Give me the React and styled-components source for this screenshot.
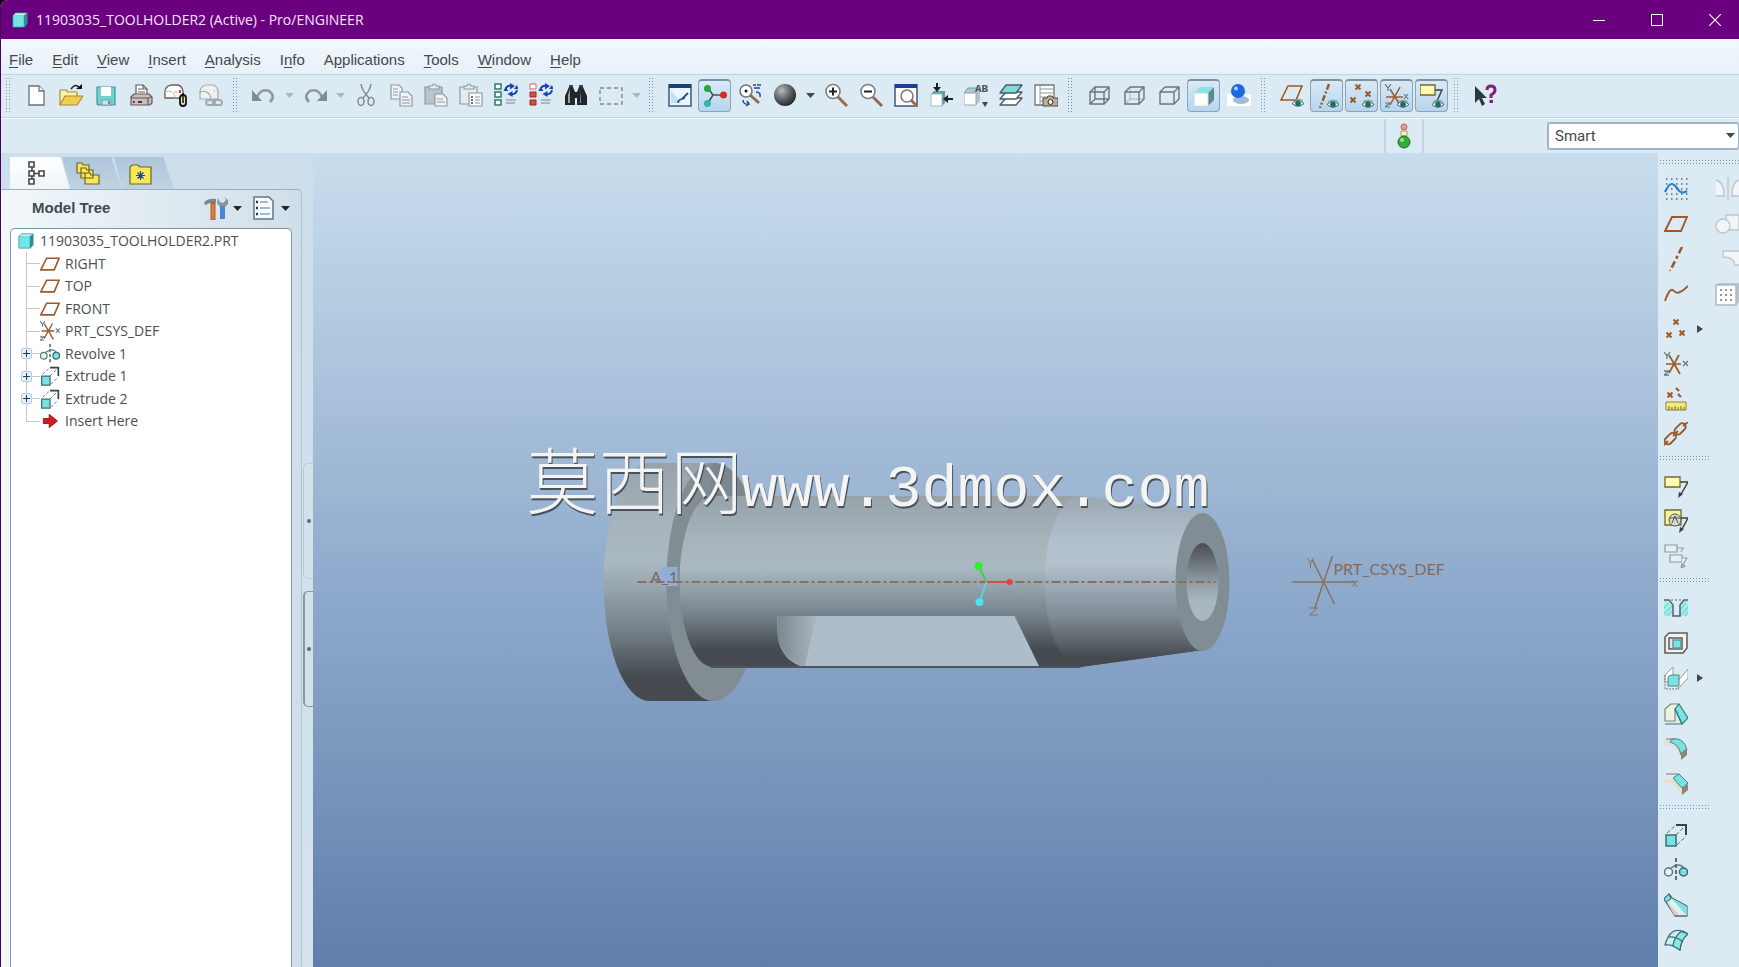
import React, { useState } from 'react';
import styled, { createGlobalStyle, css } from 'styled-components';

const GlobalStyle = createGlobalStyle`
  * {
    box-sizing: border-box;
  }
  html, body, #root {
    height: 100%;
    margin: 0;
  }
  body {
    overflow: hidden;
    background: #16001c;
    font-family: "Liberation Sans", Arial, sans-serif;
    color: #43494f;
  }
  button {
    border: 0;
    padding: 0;
    background: none;
    font: inherit;
    color: inherit;
  }
`;

const Window = styled.div`
  height: 100%;
  display: flex;
  flex-direction: column;
  background: #dce9f2;
  border-left: 1px solid #4b0060;
  border-top-left-radius: 8px;
  overflow: hidden;
`;

const TitleBar = styled.header`
  display: flex;
  align-items: center;
  height: 39px;
  flex-shrink: 0;
  padding: 0 1px 0 10px;
  background: #6a007f;
  color: #f6e6fa;
`;

const AppTitle = styled.h1`
  margin: 0 auto 0 7px;
  font: 400 14px/20px "Open Sans", sans-serif;
`;

const WindowControls = styled.div`
  display: flex;
  gap: 11px;
`;

const WindowButton = styled.button`
  display: flex;
  align-items: center;
  justify-content: center;
  width: 47px;
  height: 39px;

  &:hover {
    background: #84209a;
  }
`;

const MenuBar = styled.nav`
  display: flex;
  gap: 19px;
  height: 35px;
  flex-shrink: 0;
  padding: 7px 8px 0;
  background: linear-gradient(#f3f9fd, #e6f0f7);
`;

const MenuButton = styled.button`
  font-size: 15px;
  line-height: 28px;

  u {
    text-underline-offset: 2px;
  }
`;

const ToolBar = styled.div`
  display: flex;
  align-items: center;
  gap: 2px;
  height: 44px;
  flex-shrink: 0;
  padding: 0 0 2px 4px;
  border-top: 1px solid #c3d4e1;
  border-bottom: 1px solid #c3d4e1;
  background: #dceaf3;
`;

const gripDots = css`
  background-image: radial-gradient(circle, #7c93a8 1px, transparent 1px);
  background-size: 3px 3px;
`;

const Grip = styled.span`
  ${gripDots}
  width: 6px;
  height: 36px;
  margin: 0 ${(p) => (p.$first ? 6 : 7)}px 0 ${(p) => (p.$first ? 0 : 3)}px;
`;

const ToolButton = styled.button`
  display: flex;
  align-items: center;
  justify-content: center;
  width: 33px;
  height: 33px;
  flex-shrink: 0;
  border-radius: 4px;

  &:hover {
    background: #cfe2f0;
  }

  ${(p) =>
    p.$on &&
    css`
      border: 1px solid #8fa5b6;
      border-top: 2px solid #80929f;
      background: linear-gradient(#d9e9f6, #b5d5ef);
    `}
`;

const DropButton = styled.button`
  display: flex;
  align-items: center;
  justify-content: center;
  width: 14px;
  height: 33px;
  flex-shrink: 0;
`;

const StatusRow = styled.div`
  display: flex;
  align-items: stretch;
  height: 35px;
  flex-shrink: 0;
  border-top: 1px solid #f4fafd;
  background: #dceaf3;
`;

const RegenStatus = styled.div`
  display: flex;
  align-items: center;
  justify-content: center;
  width: 40px;
  margin-left: auto;
  border-left: 2px solid #c5d4df;
  border-right: 2px solid #c5d4df;
`;

const FilterField = styled.label`
  position: relative;
  width: 192px;
  margin: 3px 0 3px 123px;

  svg {
    position: absolute;
    right: 4px;
    top: 9px;
    pointer-events: none;
  }
`;

const FilterSelect = styled.select`
  appearance: none;
  width: 100%;
  height: 28px;
  padding: 0 6px;
  border: 2px solid #9db5c6;
  border-right-width: 1px;
  border-radius: 3px;
  background: #fff;
  color: #43494f;
  font: 400 15px Roboto, sans-serif;
`;

const Body = styled.main`
  display: flex;
  flex: 1;
  min-height: 0;
`;

const Navigator = styled.aside`
  display: flex;
  width: 312px;
  flex-shrink: 0;
  padding-top: 4px;
  background: linear-gradient(#cddfec, #d3e2ec);
`;

const NavMain = styled.div`
  display: flex;
  flex-direction: column;
  width: 301px;
`;

const TabList = styled.div`
  display: flex;
  height: 32px;
  padding-left: 9px;
`;

const Tab = styled.button`
  display: flex;
  align-items: center;
  width: 60px;
  padding-left: 14px;
  background: linear-gradient(#aec6da, #c0d3e2);
  clip-path: polygon(0 0, 82% 0, 100% 100%, 14% 100%);

  & + & {
    margin-left: -8px;
  }

  ${(p) =>
    p.$active &&
    css`
      background: linear-gradient(#fff, #f0f5f9);
      clip-path: polygon(0 0, 84% 0, 100% 100%, 0 100%);
    `}
`;

const NavPanel = styled.section`
  display: flex;
  flex-direction: column;
  flex: 1;
  min-height: 0;
  padding: 0 9px 0 9px;
  border-top: 1px solid #9bb0c1;
  border-right: 1px solid #b3c5d3;
  border-top-right-radius: 5px;
  background: linear-gradient(90deg, #f2f7fa, #cfdfea);
`;

const PanelHeader = styled.div`
  display: flex;
  align-items: center;
  height: 38px;
  padding: 0 2px 2px 22px;
`;

const PanelTitle = styled.h2`
  margin: 0 auto 0 0;
  font-size: 15px;
  line-height: 20px;
`;

const PanelTool = styled.button`
  display: flex;
  align-items: center;
  gap: 5px;
  margin-left: 10px;
`;

const Tree = styled.ul`
  flex: 1;
  margin: 0;
  padding: 1px 0 0;
  list-style: none;
  border: 1px solid #7c98a8;
  border-bottom: 0;
  border-radius: 5px 5px 0 0;
  background: #fff;
  display: grid;
  grid-template-rows: repeat(8, 22px 23px);
  align-content: start;
`;

const TreeRow = styled.li`
  display: flex;
  align-items: center;
  padding-left: 6px;
  font: 400 14px/20px "Open Sans", sans-serif;
  color: #4c4e52;
`;

// dotted guide drawn as two backgrounds: the trunk and the branch
const Guide = styled.span`
  display: flex;
  align-items: center;
  align-self: stretch;
  width: 23px;
  padding-left: 4px;
  background:
    linear-gradient(#c3c8cc, #c3c8cc) 9px 0 / 1px ${(p) => (p.$last ? '50%' : '100%')} no-repeat,
    linear-gradient(#c3c8cc, #c3c8cc) 9px 50% / 14px 1px no-repeat;
`;

const Expander = styled.button`
  display: flex;
  align-items: center;
  justify-content: center;
  width: 11px;
  height: 11px;
  border: 1px solid #b4cde0;
  border-radius: 2px;
  background: #e4f1fa;
`;

const TreeIcon = styled.span`
  display: flex;
  margin-right: 5px;
`;

const Splitter = styled.div`
  display: flex;
  flex-direction: column;
  justify-content: center;
  gap: 12px;
  width: 11px;
  padding: 46px 0 0 1px;
`;

const SplitHandle = styled.button`
  display: flex;
  align-items: center;
  justify-content: center;
  height: 116px;
  border: 1px solid ${(p) => (p.$strong ? '#8b98a1' : '#bccbd6')};
  border-right: 0;
  border-left-width: ${(p) => (p.$strong ? 2 : 1)}px;
  border-radius: 5px 0 0 5px;
  background: #d3e2ea;

  &::after {
    content: '';
    width: 4px;
    height: 4px;
    border-radius: 2px;
    background: #5d6b76;
  }
`;

const Viewport = styled.section`
  flex: 1;
  min-width: 0;
  background: linear-gradient(#c8dded 0%, #a2bbd6 36%, #8ca8cb 55%, #7c98bd 73%, #5f7eac 100%);

  svg {
    display: block;
    width: 100%;
    height: 100%;
  }
`;

const FeatureBar = styled.aside`
  display: flex;
  width: 81px;
  flex-shrink: 0;
  padding-top: 6px;
  overflow: hidden;
  background: #dceaf3;
`;

const FeatureColumn = styled.div`
  display: flex;
  flex-direction: column;
  gap: 2px;
  width: 51px;
  flex-shrink: 0;
  padding-left: 1px;
`;

const FeatureGrip = styled.span`
  ${gripDots}
  width: 50px;
  height: 6px;
  margin: ${(p) => (p.$first ? '0 0 5px' : '3px 0 6px')};
`;

const FeatureRow = styled.div`
  display: flex;
  align-items: center;
  height: 33px;
`;

const Caret = ({ color = '#3d474f', right }) => (
  <svg width="9" height="9" viewBox="0 0 9 9" aria-hidden="true">
    <path d={right ? 'M2 1l6 4-6 4z' : 'M0 2h9L4.500 7z'} fill={color} />
  </svg>
);

const BROWN = '#9a5a2c';
const GREY = '#8f9aa2';

const Eye = () => (
  <g>
    <path d="M12 20.500q5.500-6 12 0q-6 5.500-12 0z" fill="#f3f9fb" stroke="#35675f" />
    <circle cx="18" cy="20.500" r="2.800" fill="#1f6d5c" />
    <path d="M13 17.500q5-3 10 0" fill="none" stroke="#7b9a97" />
  </g>
);

const Cross = ({ x, y, s = 2.5 }) => (
  <path
    d={`M${x - s} ${y - s}L${x + s} ${y + s}M${x + s} ${y - s}L${x - s} ${y + s}`}
    stroke={BROWN}
    strokeWidth="2"
    fill="none"
  />
);

const Spin = () => (
  <g fill="none" stroke="#1647b0" strokeWidth="2">
    <path d="M11.500 7q1-5 6-4M23 7q-1 5-6 4" />
    <path d="M16 0l5 3-5 3.500zM18.500 8l-5 3 5 3z" fill="#1647b0" stroke="none" />
    <path d="M9.500 8l2-4 3 4zM20 6l3-4 1.500 4z" fill="#1647b0" stroke="none" />
  </g>
);

const icons = {
  part: (
    <g>
      <path d="M2 6l4-4h16v15l-4 5H2z" fill="#2d8f90" />
      <path d="M3 6h14v15H3z" fill="#71e6e6" />
      <path d="M3 6l3-3h15l-4 3z" fill="#baf5f3" />
    </g>
  ),
  newFile: (
    <g fill="#fff" stroke="#68727a" strokeWidth="1.300">
      <path d="M5 3h10l5 5v14H5z" />
      <path d="M15 3v5h5" />
    </g>
  ),
  open: (
    <g strokeWidth="1.200" strokeLinejoin="round">
      <path d="M1 22V7h6l2 2h9v4" fill="#fff2a6" stroke="#a98b2e" />
      <path d="M1 22l5-9h18l-6 9z" fill="#f0cf57" stroke="#a98b2e" />
      <path d="M12 6q5-7 9 0" fill="none" stroke="#20282c" strokeWidth="1.500" />
      <path d="M17 6h6V1z" fill="#111" />
    </g>
  ),
  save: (
    <g>
      <path d="M3 4h18v18H4l-1-1z" fill="#6fd3d0" stroke="#4c8f95" strokeWidth="1.200" />
      <path d="M7 4h10v9H7z" fill="#fff" />
      <path d="M8 17h9v5H8z" fill="#d6dfe3" stroke="#5d9a9e" strokeWidth="0.800" />
      <path d="M14 18h2v3h-2z" fill="#4c8f95" />
    </g>
  ),
  print: (
    <g stroke="#625b59" strokeWidth="1.200">
      <path d="M7 13V2h7l4 4v7z" fill="#fff" />
      <path d="M9 6h4M9 9h7M14 2v4h4" fill="none" />
      <path d="M2 14l3-3h15l3 3v6l-2 2H2z" fill="#c9beba" />
      <path d="M2 15h17v7M19 15l4-1" fill="none" />
      <path d="M4 19h2m3 0h4" stroke="#2f3d44" strokeWidth="2" />
      <path d="M5 19h1" stroke="#cc3a2e" strokeWidth="2" />
    </g>
  ),
  mail: (
    <g>
      <path d="M1 15V8q1-6 8-6h5q4 1 5 6v7z" fill="#fff" stroke="#6d5d58" strokeWidth="1.300" />
      <path d="M1 9q8-3 11 6M10 9h6" fill="none" stroke="#cabdb6" />
      <path d="M15 7h2v3h-2z" fill="#d8432f" />
      <rect x="16" y="12" width="6" height="11" rx="3" fill="#f4e7ae" stroke="#111" strokeWidth="1.800" />
      <path d="M19 10v10" stroke="#111" strokeWidth="1.500" />
    </g>
  ),
  mailLink: (
    <g fill="none" stroke="#a1a9ae" strokeWidth="1.200">
      <path d="M1 16V8q1-6 8-6h5q4 1 5 6v8z" fill="#edf1f3" />
      <path d="M1 9q8-3 11 6M15 8h1" />
      <rect x="7" y="17" width="9" height="5" rx="2.500" fill="#dbe3e8" strokeWidth="2" />
      <rect x="14" y="17" width="9" height="5" rx="2.500" strokeWidth="2" />
    </g>
  ),
  undo: (
    <g>
      <path d="M5 14q4-9 12-6q7 5 1 11" fill="none" stroke="#8c99a3" strokeWidth="2.600" />
      <path d="M0 7v11h10z" fill="#7d8c97" />
    </g>
  ),
  redo: (
    <g>
      <path d="M19 14q-4-9-12-6q-7 5 -1 11" fill="none" stroke="#8c99a3" strokeWidth="2.600" />
      <path d="M24 7v11H14z" fill="#7d8c97" />
    </g>
  ),
  cut: (
    <g fill="none" stroke="#808c94" strokeWidth="1.500">
      <path d="M7 1q1 7 8 14M17 1q-1 7-8 14" />
      <ellipse cx="7" cy="18.500" rx="3" ry="4" />
      <ellipse cx="17" cy="18.500" rx="3" ry="4" />
    </g>
  ),
  copy: (
    <g fill="#eef3f6" stroke={GREY} strokeWidth="1.200">
      <path d="M2 2h8l3 3v11H2zM4 6h5M4 9h5M4 12h5" />
      <path d="M11 9h8l4 4v10H11zM13 14h6M13 17h8M13 20h8" />
    </g>
  ),
  paste: (
    <g stroke={GREY} strokeWidth="1.200">
      <path d="M1 4h17v17H1z" fill="#b9c3ca" />
      <path d="M5 5V3h3q2-4 4 0h3v3H5z" fill="#e6ecf0" />
      <path d="M11 11h8l4 4v8H11zM13 16h6M13 19h8" fill="#eef3f6" />
    </g>
  ),
  pasteSpecial: (
    <g stroke={GREY} strokeWidth="1.200">
      <path d="M1 4h17v17H1z" fill="#e3ebf0" />
      <path d="M5 5V3h3q2-4 4 0h3v3H5z" fill="#e6ecf0" />
      <path d="M10 10h13v13H10zM16 14h5M16 17h5M16 20h5" fill="#f7fafb" />
      <path d="M12 14h2M12 17h2M12 20h2" stroke="#68747d" strokeWidth="1.800" />
    </g>
  ),
  regen: (
    <g>
      <g fill="#fff" stroke="#2f7c63" strokeWidth="1.500">
        <path d="M1 1h6v5H1zM1 9h6v5H1zM1 17h6v5H1z" />
      </g>
      <Spin />
      <path d="M12 17h10M12 20h9" stroke="#7b868e" />
    </g>
  ),
  regenManager: (
    <g>
      <path d="M1 1h6v5H1z" fill="#fff" stroke="#c46a62" />
      <path d="M1 9h6v5H1zM1 17h6v5H1z" fill="#dc4b3c" stroke="#8f2c25" />
      <Spin />
      <path d="M12 17h10M12 20h9" stroke="#7b868e" />
    </g>
  ),
  find: (
    <g>
      <path d="M1 22V13l4-9h4l2 5v13zM13 22V9l2-5h4l4 9v9z" fill="#22272b" />
      <path d="M10 9h4v6h-4z" fill="#22272b" />
      <path d="M4 12l2-6v14H4zM16 12V6l1 14h-1z" fill="#9ba39a" />
      <path d="M5 3h4M15 3h4" stroke="#444" strokeWidth="2" />
    </g>
  ),
  select: <path d="M1 5h22v16H1z" fill="none" stroke="#7e8a92" strokeWidth="1.400" strokeDasharray="4 3" />,
  repaint: (
    <g>
      <path d="M1 2h22v21H1z" fill="#eaf5fd" stroke="#38597c" strokeWidth="1.500" />
      <path d="M1 1h22v4H1z" fill="#1c3f77" />
      <path d="M3 7l10 13H3z" fill="#bfe0f5" />
      <path d="M10 20q0-3 4-4l6-6M14 16l3-1" fill="none" stroke="#24508f" strokeWidth="1.800" />
    </g>
  ),
  spinCenter: (
    <g>
      <path d="M5 4l5 7-5 8M10 11h9" fill="none" stroke="#4a4f52" strokeWidth="1.600" />
      <circle cx="4.500" cy="4.500" r="3.500" fill="#25a832" />
      <circle cx="4.500" cy="19.500" r="3.500" fill="#2fb9a5" />
      <circle cx="20.500" cy="11" r="3.500" fill="#cf2f1b" />
    </g>
  ),
  orient: (
    <g>
      <path d="M12 12l9 8" stroke="#8c6c55" strokeWidth="3" />
      <circle cx="8" cy="8" r="6" fill="#fff" stroke="#6f777c" strokeWidth="1.600" />
      <circle cx="8" cy="8" r="1.500" fill="#111" />
      <path d="M15 2h3m1 0h4M16 5h6M18 9q5 0 4 5M5 17q0 5 6 4l-2-3m2 3l-3 2" fill="none" stroke="#24459b" strokeWidth="1.500" />
    </g>
  ),
  shade: <circle cx="12" cy="12" r="11" fill="url(#sphere)" />,
  zoomIn: (
    <g>
      <path d="M14 14l9 9" stroke="#9a6a50" strokeWidth="3" />
      <circle cx="9" cy="8.500" r="7" fill="#fff" stroke="#7b7f82" strokeWidth="1.600" />
      <path d="M5 8.500h8M9 4.500v8" stroke="#222" strokeWidth="2" />
    </g>
  ),
  zoomOut: (
    <g>
      <path d="M14 14l9 9" stroke="#9a6a50" strokeWidth="3" />
      <circle cx="9" cy="8.500" r="7" fill="#fff" stroke="#7b7f82" strokeWidth="1.600" />
      <path d="M5 8.500h8" stroke="#222" strokeWidth="2" />
    </g>
  ),
  refit: (
    <g>
      <path d="M1 2h22v21H1z" fill="#fff" stroke="#38597c" strokeWidth="1.500" />
      <path d="M1 1h22v4H1z" fill="#1d3f8e" />
      <path d="M17 17l6 6" stroke="#9a6a50" strokeWidth="3" />
      <circle cx="13" cy="13" r="6" fill="#fff" stroke="#8a6f68" strokeWidth="1.500" />
    </g>
  ),
  reorient: (
    <g>
      <path d="M2 11l3-3h11v12l-3 3H2z" fill="#58a49c" />
      <path d="M2 11h11v12H2z" fill="#fff" stroke="#9fbdb9" />
      <path d="M8 0v6M24 16h-6" stroke="#1b2124" strokeWidth="2" />
      <path d="M4 4h8l-4 5zM19 12v8l-5-4z" fill="#1b2124" />
    </g>
  ),
  annotations: (
    <g>
      <path d="M0 10l4-5h12v13l-4 4H0z" fill="#b7c3c9" />
      <path d="M0 10h12v12H0z" fill="#fff" stroke="#98a6ad" />
      <path d="M0 10l4-5h10" stroke="#3cb6bb" />
      <text x="11" y="9" fontFamily="Liberation Mono, monospace" fontSize="11" fontWeight="700" fill="#4b5256">
        AB
      </text>
      <path d="M18 19h6l-3 5z" fill="#3d474f" />
    </g>
  ),
  layers: (
    <g fill="#fff" stroke="#4f5a60" strokeWidth="1.300" strokeLinejoin="round">
      <path d="M1 22l6-7h16l-6 7z" />
      <path d="M1 16l6-7h16l-6 7z" />
      <path d="M1 10l6-8h16l-6 8z" fill="#7fdcd8" />
    </g>
  ),
  viewManager: (
    <g>
      <path d="M1 2h19v20H1z" fill="#fff" stroke="#6f777c" strokeWidth="1.300" />
      <path d="M6 2v20M6 6h14M6 10h14M6 14h14M6 18h14" stroke="#8e979d" />
      <path d="M9 15h4l1-2h4l1 2h5v8H9z" fill="#b9b099" stroke="#4b463c" />
      <circle cx="16.500" cy="19" r="2.500" fill="#f2efe5" stroke="#332f27" />
    </g>
  ),
  wireframe: (
    <g fill="none" stroke="#6c757c" strokeWidth="1.400">
      <path d="M3 9h14v12H3zM8 4h14v12H8zM3 9l5-5M17 9l5-5M3 21l5-5M17 21l5-5" />
    </g>
  ),
  hiddenLine: (
    <g fill="none" stroke="#6c757c" strokeWidth="1.400">
      <path d="M8 4v12h14M8 16l-5 5" stroke="#b9c3ca" />
      <path d="M3 9h14v12H3zM3 9l5-5h14v12l-5 5M17 9l5-5" />
    </g>
  ),
  noHidden: (
    <path d="M3 9h14v12H3zM3 9l5-5h14v12l-5 5M17 9l5-5" fill="none" stroke="#6c757c" strokeWidth="1.400" strokeLinejoin="round" />
  ),
  shading: (
    <g strokeLinejoin="round">
      <path d="M16 9l6-6v13l-6 6z" fill="#5d898e" />
      <path d="M2 9l6-6h14l-6 6z" fill="#84e5df" />
      <path d="M2 9h14v13H2z" fill="#fff" stroke="#c5dcd9" />
    </g>
  ),
  enhanced: (
    <g>
      <path d="M0 11h24v12H0z" fill="#fff" />
      <ellipse cx="14" cy="17" rx="8" ry="4" fill="#9ebbdc" />
      <circle cx="11" cy="8" r="7" fill="#1a6be0" />
      <circle cx="9" cy="5.500" r="2" fill="#a9d3ff" />
    </g>
  ),
  planeEye: (
    <g>
      <path d="M1 17L8 3h14l-6 14z" fill="none" stroke={BROWN} strokeWidth="1.600" />
      <Eye />
    </g>
  ),
  axisEye: (
    <g>
      <path d="M14 0L5 24" stroke={BROWN} strokeWidth="2.500" strokeDasharray="6 2 2 2" />
      <Eye />
    </g>
  ),
  pointsEye: (
    <g>
      <Cross x={8} y={3} />
      <Cross x={3} y={16} />
      <Cross x={18} y={10} />
      <Eye />
    </g>
  ),
  csysEye: (
    <g>
      <path d="M1 13h17M5 21L15 3M5 5l10 16" stroke={BROWN} strokeWidth="1.500" />
      <path d="M0 0l3 4 3-4M3 4v3M0 19h5l-5 4h5M19 10l4 5m0-5l-4 5" fill="none" stroke="#6d7880" strokeWidth="1.200" />
      <Eye />
    </g>
  ),
  noteEye: (
    <g>
      <path d="M0 1h15v10H0z" fill="#fffbb5" stroke="#6f6a2c" strokeWidth="1.300" />
      <path d="M15 6h7l-5 11" fill="none" stroke="#3c4347" strokeWidth="1.500" />
      <Eye />
    </g>
  ),
  help: (
    <g>
      <path d="M2 3v17l4-4 3 7 3-2-3-6h5z" fill="#2c3940" />
      <path d="M14 7q0-4 4-4t4 4q0 3-4 5v3M16.500 18.500h3.500" fill="none" stroke="#84207f" strokeWidth="3" />
    </g>
  ),
  sketch: (
    <g>
      <path
        d="M2 2h22M2 7h22M2 12h22M2 17h22M2 22h22"
        fill="none"
        stroke="#4d6a84"
        strokeWidth="1.500"
        strokeDasharray="1.500 3.500"
      />
      <path d="M1 15C6 4 9 6 13 11q4 7 10 3" fill="none" stroke="#2b83c4" strokeWidth="2.200" />
    </g>
  ),
  plane: <path d="M1 19L8 5h15l-6 14z" fill="none" stroke={BROWN} strokeWidth="1.900" />,
  axis: <path d="M18 0L6 24" stroke={BROWN} strokeWidth="2.600" strokeDasharray="7 3 3 3" />,
  curve: <path d="M1 19q5-15 9-10t14-5" fill="none" stroke={BROWN} strokeWidth="1.900" />,
  points: (
    <g>
      <Cross x={12} y={5} />
      <Cross x={5} y={18} />
      <Cross x={18} y={16} />
    </g>
  ),
  csys: (
    <g>
      <path d="M2 12h15M5 21L15 3M5 3l11 19" stroke={BROWN} strokeWidth="1.700" />
      <path d="M0 0l3 4 3-4M3 4v3M0 19h5l-5 4h5M19 9l5 5m0-5l-5 5" fill="none" stroke="#6d7880" strokeWidth="1.300" />
    </g>
  ),
  analysis: (
    <g>
      <Cross x={6} y={8} />
      <path d="M12 1l3 3M14 7l3 3" stroke={BROWN} strokeWidth="2.200" />
      <path d="M2 15h20v8H2z" fill="#f5ea7c" stroke="#8d8235" />
      <path d="M5 23v-4M8 23v-3M11 23v-4M14 23v-3M17 23v-4M20 23v-3" stroke="#6f6628" />
    </g>
  ),
  chain: (
    <g fill="none" stroke={BROWN} strokeWidth="1.900">
      <rect x="-6" y="-3.500" width="13" height="7" rx="3.500" transform="translate(6 17) rotate(-45)" />
      <rect x="-5" y="-3.500" width="13" height="7" rx="3.500" transform="translate(15 8) rotate(-45)" />
      <path d="M0 23l4-4M9 14l5-5M19 4l5-4" />
    </g>
  ),
  note: (
    <g>
      <path d="M1 3h15v10H1z" fill="#fffbb5" stroke="#6f6a2c" strokeWidth="1.300" />
      <path d="M16 8h8l-8 14" fill="none" stroke="#3c4347" strokeWidth="1.500" />
      <path d="M14 24l1-6 4 2z" fill="#3c4347" />
    </g>
  ),
  symbol: (
    <g>
      <path d="M1 1h16v15H1z" fill="#fbf49a" stroke="#6f6a2c" strokeWidth="1.300" />
      <circle cx="11" cy="11" r="6" fill="#d9d9c4" stroke="#4f5558" />
      <path d="M8 14l3-7 3 7M6 9h10" fill="none" stroke="#4f5558" />
      <path d="M17 9h7l-7 13" fill="none" stroke="#3c4347" strokeWidth="1.500" />
      <path d="M15 24l1-6 4 2z" fill="#3c4347" />
    </g>
  ),
  noteOff: (
    <g fill="#e8eff3" stroke={GREY} strokeWidth="1.200">
      <path d="M1 1h12v7H1zM13 4h6l-2 4M6 11h12v7H6z" />
      <path d="M18 14h5l-5 8m-1 2l1-4 3 2z" />
    </g>
  ),
  hole: (
    <g>
      <path d="M0 5h4l4 5v10h8V10l4-5h4v15H0z" fill="#a9eeec" />
      <path d="M0 12l5-5M0 18l8-8M3 20l5-5M16 14l6-7M16 20l8-9M21 20l3-4" stroke="#6fdcdc" strokeWidth="1.500" />
      <path d="M0 4h5l4 5v11h7V9l4-5h4" fill="none" stroke="#4c6468" strokeWidth="1.500" />
      <path d="M7 4h11" stroke="#4c6468" strokeDasharray="2 2" />
    </g>
  ),
  shell: (
    <g strokeWidth="1.500" stroke="#5f5a58">
      <path d="M1 6l4-4h18v15l-4 5H1z" fill="#f4f2ef" />
      <path d="M5 7h13v11H5z" fill="#e4e8e6" />
      <path d="M9 9h8v8H9z" fill="#79e2e2" stroke="#5a9a9b" />
    </g>
  ),
  rib: (
    <g strokeLinejoin="round">
      <path d="M1 9l8-8v15H1zM14 15L24 3v9L14 23z" fill="#fff" stroke="#9b9a92" />
      <path d="M4 20v-8q1-3 4-3h7v11z" fill="#79e2e2" stroke="#5a7f80" />
      <path d="M1 9v14h14" stroke="#8b7a70" strokeDasharray="2 1" />
    </g>
  ),
  draft: (
    <g strokeLinejoin="round" strokeWidth="1.200">
      <path d="M1 8l6-5h8l-4 5v12H1z" fill="#eef2e4" stroke="#7f8a76" />
      <path d="M15 3l9 14-6 6-7-15z" fill="#79e2e2" stroke="#327b80" />
      <path d="M1 23h17L11 8" fill="none" stroke="#327b80" />
    </g>
  ),
  round: (
    <g>
      <path d="M0 9q13-2 17 14V12q-2-6-9-8H0z" fill="#e4e0d5" />
      <path d="M8 3q12-2 15 11l-6 5Q15 8 6 6z" fill="#79e2e2" stroke="#3d8588" />
      <path d="M17 17l6-5v7l-6 5z" fill="#8b8478" />
      <path d="M2 3h8" stroke="#7d7a70" />
    </g>
  ),
  chamfer: (
    <g>
      <path d="M0 8h8l10 8v8L8 12H0z" fill="#e4e0d5" />
      <path d="M9 7l6-4 9 9-6 5z" fill="#79e2e2" stroke="#3d8588" />
      <path d="M18 17l6-4v6l-6 5z" fill="#8b8478" />
      <path d="M2 3h13" stroke="#7d7a70" />
    </g>
  ),
  extrude: (
    <g>
      <path d="M2 12h10v11H2z" fill="#79e2e2" stroke="#3d6f73" strokeWidth="1.500" />
      <path d="M12 2h10v10" fill="none" stroke="#30464a" strokeWidth="2" />
      <path d="M3 10l9-8M13 22l9-9M12 12l8-8" fill="none" stroke="#5b6c70" strokeDasharray="4 2" />
    </g>
  ),
  revolve: (
    <g strokeWidth="1.500">
      <path d="M12 0v24" stroke="#3a4347" strokeDasharray="4 2" />
      <circle cx="4.500" cy="14" r="4" fill="#e3f6f6" stroke="#59797c" />
      <circle cx="19.500" cy="14" r="4" fill="#79e2e2" stroke="#36696d" />
      <path d="M7 10q8-6 13 0" fill="none" stroke="#59797c" />
    </g>
  ),
  sweep: (
    <g strokeLinejoin="round">
      <path d="M0 6l5-5 3 4 15 8v10H11z" fill="#dff0ee" stroke="#4b6f72" strokeWidth="1.300" />
      <path d="M7 5l16 9v9z" fill="#79e2e2" />
      <path d="M2 7l13 15h-5z" fill="#e5c9c4" />
      <path d="M0 6l5-5 2 5-5 3z" fill="#79e2e2" stroke="#36696d" />
    </g>
  ),
  boundary: (
    <g strokeWidth="1.300" strokeLinejoin="round">
      <path d="M1 17Q4 6 10 3q7-2 14 3Q17 11 16 22q-7-6-15-5z" fill="#c9f1ef" stroke="#436f73" />
      <path d="M17 3.500Q20 4 24 6Q17 11 16 22L9 18Q10 9 17 3.500z" fill="#8be6e5" stroke="#436f73" />
      <path d="M4 9q8-1 15 5" fill="none" stroke="#436f73" />
    </g>
  ),
  mirror: (
    <g fill="#f1f5f8" stroke="#bcc6ce" strokeWidth="1.300">
      <path d="M1 3q8 2 8 16H1M13 0v24M24 3q-7 2-7 16h7" />
    </g>
  ),
  merge: (
    <g fill="#f1f5f8" stroke="#bcc6ce" strokeWidth="1.300">
      <path d="M11 3h13v15H11z" />
      <circle cx="8" cy="14" r="7" />
    </g>
  ),
  trim: <path d="M8 4h18v14h-6q-1-8-12-8z" fill="#f1f5f8" stroke="#bcc6ce" strokeWidth="1.300" />,
  pattern: (
    <g>
      <path d="M1 3l3-2h20v19l-3 3H1z" fill="#b9c3ca" />
      <path d="M1 3h20v20H1z" fill="#fff" stroke="#aeb9c1" strokeWidth="1.500" />
      <path d="M5 8h14M5 13h14M5 18h14" stroke="#8e999f" strokeWidth="1.800" strokeDasharray="2 3" />
    </g>
  ),
  treeTab: (
    <g fill="#fff" stroke="#41474b" strokeWidth="1.600">
      <path d="M5 1h5v5H5zM5 10h5v5H5zM5 18h5v5H5zM15 10h5v5h-5zM8 6v4M8 15v3M10 12.500h5" />
    </g>
  ),
  folders: (
    <g fill="#f8e75c" stroke="#6f6420" strokeWidth="1.200">
      <path d="M1 2h5l1 2h6v8H1zM5 7h5l1 2h6v8H5zM9 12h5l1 2h8v9H9z" />
    </g>
  ),
  favorites: (
    <g>
      <path d="M2 6l2-2h6l2 2h11v17H2z" fill="#f8e75c" stroke="#6f6420" strokeWidth="1.200" />
      <path d="M12.500 10v9M8 14.500h9M9.500 11.500l6 6M15.500 11.500l-6 6" stroke="#23409a" strokeWidth="1.200" />
    </g>
  ),
  settings: (
    <g>
      <path d="M0 7q3-5 12-4v4H6L1 9z" fill="#7b878f" />
      <path d="M7 7h4v17H7z" fill="#e0813a" stroke="#8e4e1e" strokeWidth="0.800" />
      <path d="M14 2l2 4 3 1 3-3-2-3 4 3v4l-3 3h-5l-3-4z" fill="#8a969d" />
      <path d="M16 10h5v13h-5z" fill="#4a86d2" />
    </g>
  ),
  show: (
    <g>
      <path d="M2 1h15l4 4v18H2z" fill="#f5fafe" stroke="#667580" strokeWidth="1.500" />
      <path d="M8 6h8M8 12h10M8 18h10" stroke="#5d7890" strokeWidth="1.200" />
      <path d="M4 6h2M4 12h2M4 18h2" stroke="#2c3a44" strokeWidth="2.500" />
    </g>
  ),
  insert: <path d="M4 9h7V4l10 8-10 8v-5H4z" fill="#cf1d1d" stroke="#8e1010" />,
};

const Icon = ({ name, size = 24 }) => (
  <svg width={size} height={size} viewBox="0 0 24 24" fill="none" aria-hidden="true">
    {icons[name]}
  </svg>
);

const menus = [
  ['File', 0],
  ['Edit', 0],
  ['View', 0],
  ['Insert', 0],
  ['Analysis', 0],
  ['Info', 1],
  ['Applications', 1],
  ['Tools', 0],
  ['Window', 0],
  ['Help', 0],
];

// '-' is a disabled drop arrow, '+' an enabled one
const toolGroups = [
  ['newFile', 'open', 'save', 'print', 'mail', 'mailLink'],
  ['undo', '-', 'redo', '-', 'cut', 'copy', 'paste', 'pasteSpecial', 'regen', 'regenManager', 'find', 'select', '-'],
  ['repaint', 'spinCenter', 'orient', 'shade', '+', 'zoomIn', 'zoomOut', 'refit', 'reorient', 'annotations', 'layers', 'viewManager'],
  ['wireframe', 'hiddenLine', 'noHidden', 'shading', 'enhanced'],
  ['planeEye', 'axisEye', 'pointsEye', 'csysEye', 'noteEye'],
  ['help'],
];

const featureGroups = [
  ['sketch', 'plane', 'axis', 'curve', 'points', 'csys', 'analysis', 'chain'],
  ['note', 'symbol', 'noteOff'],
  ['hole', 'shell', 'rib', 'draft', 'round', 'chamfer'],
  ['extrude', 'revolve', 'sweep', 'boundary'],
];
const editFeatures = ['mirror', 'merge', 'trim', 'pattern'];
const flyouts = ['points', 'rib'];

const treeItems = [
  { label: 'RIGHT', icon: 'plane' },
  { label: 'TOP', icon: 'plane' },
  { label: 'FRONT', icon: 'plane' },
  { label: 'PRT_CSYS_DEF', icon: 'csys' },
  { label: 'Revolve 1', icon: 'revolve', expandable: true },
  { label: 'Extrude 1', icon: 'extrude', expandable: true },
  { label: 'Extrude 2', icon: 'extrude', expandable: true },
  { label: 'Insert Here', icon: 'insert' },
];

const shadeStops = [
  [0, '#97a2a9'],
  [0.25, '#a6b3bb'],
  [0.42, '#aab9c1'],
  [0.7, '#74818a'],
  [0.9, '#454a50'],
  [1, '#474b50'],
];

const ModelView = () => (
  <svg viewBox="314 153 1344 814" role="img" aria-label="Tool holder model">
    <defs>
      <linearGradient id="flange" gradientUnits="userSpaceOnUse" x1="0" y1="463" x2="0" y2="701">
        {shadeStops.map(([o, c]) => (
          <stop key={o} offset={o} stopColor={c} />
        ))}
      </linearGradient>
      <linearGradient id="shank" gradientUnits="userSpaceOnUse" x1="0" y1="496" x2="0" y2="667">
        {shadeStops.map(([o, c]) => (
          <stop key={o} offset={o} stopColor={c} />
        ))}
      </linearGradient>
      <linearGradient id="taper" gradientUnits="userSpaceOnUse" x1="0" y1="496" x2="0" y2="667">
        <stop offset="0" stopColor="#9ba8b2" />
        <stop offset="0.25" stopColor="#b1bfcc" />
        <stop offset="0.4" stopColor="#b3c1cd" />
        <stop offset="0.7" stopColor="#7e8b95" />
        <stop offset="0.95" stopColor="#45494e" />
      </linearGradient>
      <linearGradient id="bore" x1="0" y1="0" x2="0" y2="1">
        <stop offset="0" stopColor="#474c51" />
        <stop offset="0.5" stopColor="#8f9ca4" />
        <stop offset="0.75" stopColor="#a9b8c0" />
      </linearGradient>
      <linearGradient id="cutEnd" x1="0" y1="0" x2="1" y2="0">
        <stop offset="0" stopColor="#7c8890" />
        <stop offset="1" stopColor="#a9b6c0" />
      </linearGradient>
    </defs>

    <path d="M650 463A46 119 0 0 0 650 701H714V463z" fill="url(#flange)" />
    <ellipse cx="714" cy="582" rx="47" ry="119" fill="#818c93" />
    <path d="M714 463q22 1 35 33h-40z" fill="#7b868e" />
    <path d="M713 496A33 85.500 0 0 0 713 667H1081L1203 650V513L1081 496z" fill="url(#shank)" />
    <path d="M1081 496A36 85.500 0 0 0 1081 667L1203 650V513z" fill="url(#taper)" />
    <path d="M778 616H1015L1040 667H803Q778 658 778 630z" fill="#aebdca" />
    <path d="M778 616H817L805 667Q778 658 778 630z" fill="url(#cutEnd)" />
    <path d="M711 667H1081" stroke="#4c555d" strokeWidth="2" />
    <ellipse cx="1203" cy="582" rx="27" ry="69" fill="#818d95" />
    <ellipse cx="1203" cy="582" rx="16" ry="39" fill="url(#bore)" />

    <path d="M661 567h17v19h-17z" fill="#8fafd6" />
    <text x="651" y="583" fontFamily="Lato, sans-serif" fontSize="16" fill="#75665f">
      A_1
    </text>
    <path d="M638 582H1216" stroke="#87705f" strokeWidth="2" strokeDasharray="9 3 3 3" />
    <path d="M987 582H1010" stroke="#d94a49" strokeWidth="2" />
    <circle cx="1010" cy="582" r="3" fill="#f03c3c" />
    <path d="M979 566L987 582" stroke="#4cc15c" strokeWidth="2" />
    <circle cx="979" cy="566" r="4" fill="#2bf22b" />
    <path d="M987 582L980 602" stroke="#56d6e0" strokeWidth="2" />
    <circle cx="980" cy="602" r="4" fill="#49e3f0" />

    <g stroke="#86715f" strokeWidth="1.500" fill="none">
      <path d="M1293 582H1357M1333 556L1315 609M1313 560L1335 604" />
      <path d="M1308 558l3 5 3-5M1311 563v5M1352 580l6 7m0-7l-6 7M1310 608h8l-8 7h8" strokeWidth="1" />
    </g>
    <text x="1334" y="575" fontFamily="Lato, sans-serif" fontSize="16" fill="#86695a">
      PRT_CSYS_DEF
    </text>

    <g fontSize="72" fontFamily="Noto Sans CJK SC, sans-serif" fontWeight="300">
      <text x="527" y="508" fill="#f4f4f2" style={{ filter: 'drop-shadow(1px 2px 0 #47525e)' }}>莫西网</text>
    </g>
    <g fontSize="60" fontFamily="Liberation Mono, monospace">
      <text x="742" y="506" fill="#f4f4f2" style={{ filter: 'drop-shadow(1px 2px 0 #47525e)' }}>www.3dmox.com</text>
    </g>
  </svg>
);

export default function App() {
  const [pressed, setPressed] = useState(['spinCenter', 'shading', 'axisEye', 'pointsEye', 'csysEye', 'noteEye']);
  const [tab, setTab] = useState('treeTab');

  const toggle = (name) =>
    setPressed((list) => (list.includes(name) ? list.filter((n) => n !== name) : [...list, name]));

  return (
    <>
      <GlobalStyle />
      <svg width="0" height="0" style={{ position: 'absolute' }} aria-hidden="true">
        <radialGradient id="sphere" cx="0.35" cy="0.3" r="0.75">
          <stop offset="0" stopColor="#b9bdc0" />
          <stop offset="0.45" stopColor="#6b7074" />
          <stop offset="1" stopColor="#202326" />
        </radialGradient>
      </svg>
      <Window>
        <TitleBar>
          <Icon name="part" size={18} />
          <AppTitle>11903035_TOOLHOLDER2 (Active) - Pro/ENGINEER</AppTitle>
          <WindowControls>
            <WindowButton aria-label="Minimize">
              <svg width="12" height="12"><path d="M0 6.500h12" stroke="#fff" /></svg>
            </WindowButton>
            <WindowButton aria-label="Maximize">
              <svg width="12" height="12"><path d="M.5.5h11v11H.5z" fill="none" stroke="#fff" /></svg>
            </WindowButton>
            <WindowButton aria-label="Close">
              <svg width="12" height="12"><path d="M0 0l12 12M12 0L0 12" stroke="#fff" strokeWidth="1.200" /></svg>
            </WindowButton>
          </WindowControls>
        </TitleBar>

        <MenuBar>
          {menus.map(([label, key]) => (
            <MenuButton key={label}>
              {label.slice(0, key)}
              <u>{label[key]}</u>
              {label.slice(key + 1)}
            </MenuButton>
          ))}
        </MenuBar>

        <ToolBar>
          {toolGroups.map((group, g) => (
            <React.Fragment key={g}>
              <Grip $first={g === 0} />
              {group.map((name, i) =>
                name === '-' || name === '+' ? (
                  <DropButton key={i} aria-label="More">
                    <Caret color={name === '-' ? '#a9b7c2' : undefined} />
                  </DropButton>
                ) : (
                  <ToolButton key={name} aria-label={name} $on={pressed.includes(name)} onClick={() => toggle(name)}>
                    <Icon name={name} />
                  </ToolButton>
                )
              )}
            </React.Fragment>
          ))}
        </ToolBar>

        <StatusRow>
          <RegenStatus>
            <svg width="14" height="26" viewBox="0 0 14 26" aria-label="Regeneration status">
              <circle cx="7" cy="4" r="3" fill="#e59aa2" stroke="#b2636b" />
              <path d="M4 8h6v5H4z" fill="#f7f0b4" stroke="#a8a05a" />
              <circle cx="7" cy="19" r="6" fill="#2fae35" stroke="#1c6b24" />
              <circle cx="5" cy="17" r="2" fill="#8fe58d" />
            </svg>
          </RegenStatus>
          <FilterField>
            <FilterSelect aria-label="Selection filter" defaultValue="Smart">
              <option>Smart</option>
              <option>Geometry</option>
              <option>Datums</option>
            </FilterSelect>
            <Caret />
          </FilterField>
        </StatusRow>

        <Body>
          <Navigator>
            <NavMain>
              <TabList>
                {['treeTab', 'folders', 'favorites'].map((name) => (
                  <Tab key={name} aria-label={name} $active={tab === name} onClick={() => setTab(name)}>
                    <Icon name={name} />
                  </Tab>
                ))}
              </TabList>
              <NavPanel>
                <PanelHeader>
                  <PanelTitle>Model Tree</PanelTitle>
                  <PanelTool aria-label="Settings">
                    <Icon name="settings" />
                    <Caret color="#1f262b" />
                  </PanelTool>
                  <PanelTool aria-label="Show">
                    <Icon name="show" />
                    <Caret color="#1f262b" />
                  </PanelTool>
                </PanelHeader>
                <Tree>
                  <TreeRow>
                    <TreeIcon><Icon name="part" size={18} /></TreeIcon>
                    11903035_TOOLHOLDER2.PRT
                  </TreeRow>
                  {treeItems.map(({ label, icon, expandable }, i) => (
                    <TreeRow key={label}>
                      <Guide $last={i === treeItems.length - 1}>
                        {expandable && (
                          <Expander aria-label={`Expand ${label}`}>
                            <svg width="7" height="7"><path d="M0 3.500h7M3.500 0v7" stroke="#24405c" /></svg>
                          </Expander>
                        )}
                      </Guide>
                      <TreeIcon><Icon name={icon} size={20} /></TreeIcon>
                      {label}
                    </TreeRow>
                  ))}
                </Tree>
              </NavPanel>
            </NavMain>
            <Splitter>
              <SplitHandle aria-label="Collapse navigator" />
              <SplitHandle $strong aria-label="Collapse browser" />
            </Splitter>
          </Navigator>

          <Viewport>
            <ModelView />
          </Viewport>

          <FeatureBar>
            <FeatureColumn>
              {featureGroups.map((group, g) => (
                <React.Fragment key={g}>
                  <FeatureGrip $first={g === 0} />
                  {group.map((name) => (
                    <FeatureRow key={name}>
                      <ToolButton aria-label={name}>
                        <Icon name={name} />
                      </ToolButton>
                      {flyouts.includes(name) && (
                        <DropButton aria-label={`More ${name}`}>
                          <Caret right />
                        </DropButton>
                      )}
                    </FeatureRow>
                  ))}
                </React.Fragment>
              ))}
            </FeatureColumn>
            <FeatureColumn>
              <FeatureGrip $first />
              {editFeatures.map((name) => (
                <FeatureRow key={name}>
                  <ToolButton aria-label={name}>
                    <Icon name={name} />
                  </ToolButton>
                </FeatureRow>
              ))}
            </FeatureColumn>
          </FeatureBar>
        </Body>
      </Window>
    </>
  );
}
